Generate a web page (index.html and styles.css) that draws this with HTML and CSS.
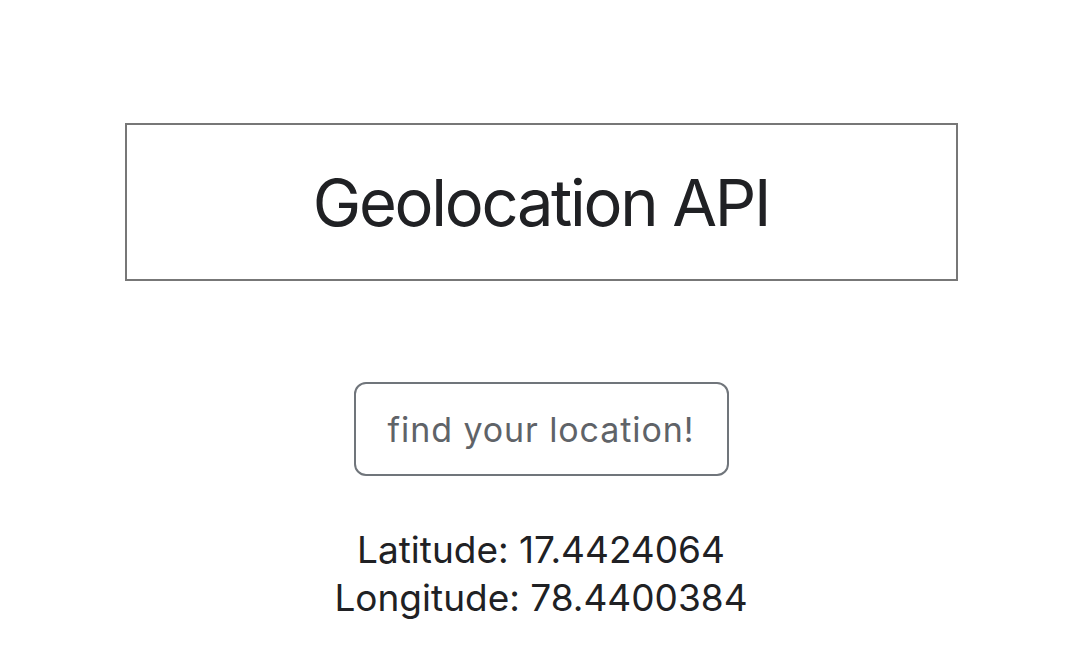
FILE: index.html
```html
<!DOCTYPE html>
<html>
<head>
<meta charset="utf-8">
<link rel="stylesheet" href="styles.css">
</head>
<body>
<main class="page">
  <header class="title-box">
    <h1 class="title">Geolocation API</h1>
  </header>
  <button class="find-btn">find your location!</button>
  <div class="coords">
    <p class="coord">Latitude: 17.4424064</p>
    <p class="coord">Longitude: 78.4400384</p>
  </div>
</main>
</body>
</html>
```

FILE: styles.css
```css
html, body {
  margin: 0;
  padding: 0;
  background: #ffffff;
}
body {
  font-family: Inter, Roboto, sans-serif;
  color: #202124;
}
.page {
  display: flex;
  flex-direction: column;
  align-items: center;
  padding-top: 123px;
  padding-left: 2px;
}
.title-box {
  box-sizing: border-box;
  width: 833px;
  height: 158px;
  border: 2px solid #777777;
  display: flex;
  align-items: center;
  justify-content: center;
}
.title {
  margin: 0;
  font-size: 65px;
  font-weight: 400;
  letter-spacing: -2.3px;
  line-height: 1;
  color: #202124;
}
.find-btn {
  box-sizing: border-box;
  margin-top: 101px;
  width: 375px;
  height: 94px;
  border: 2px solid #70757b;
  border-radius: 12px;
  background: #ffffff;
  color: #5f6368;
  font-family: Inter, Roboto, sans-serif;
  font-size: 34px;
  letter-spacing: 0.9px;
  padding: 0;
}
.coords {
  margin-top: 50px;
  text-align: center;
}
.coord {
  margin: 0;
  font-size: 37px;
  line-height: 48px;
  color: #202124;
}
```
